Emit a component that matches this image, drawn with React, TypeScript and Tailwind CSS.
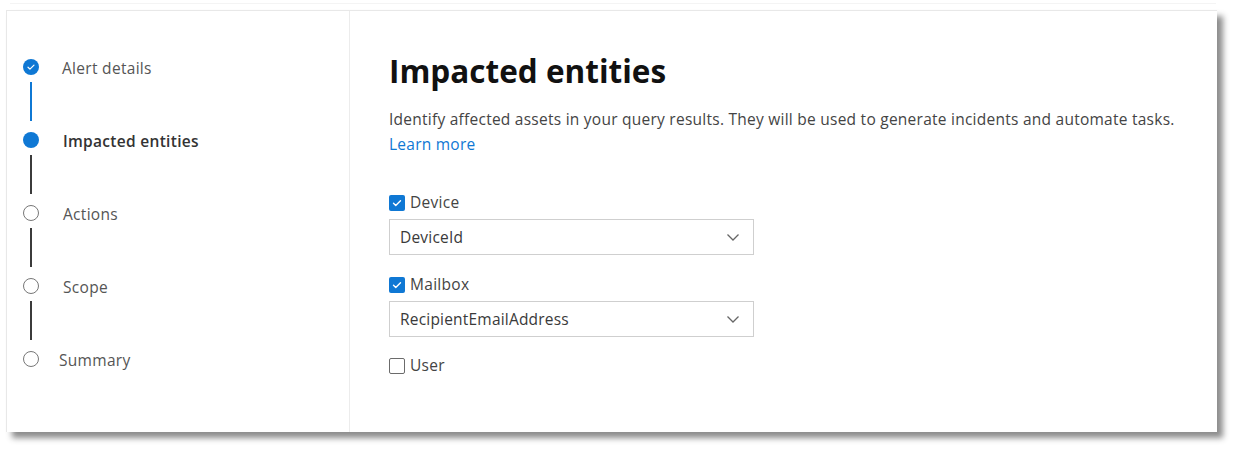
import React from "react";

const font = { fontFamily: '"Open Sans", "Noto Sans", Arial, sans-serif' };

function Check({ className = "" }: { className?: string }) {
  return (
    <svg viewBox="0 0 16 16" className={className} fill="none">
      <path d="M4 8.3l2.6 2.6L12 5.5" stroke="white" strokeWidth="1.6" strokeLinecap="round" strokeLinejoin="round" />
    </svg>
  );
}

function StepCircle({ state }: { state: "done" | "current" | "todo" }) {
  if (state === "done")
    return (
      <div className="w-4 h-4 shrink-0 rounded-full bg-[#0f78d4] flex items-center justify-center">
        <Check className="w-3 h-3" />
      </div>
    );
  if (state === "current") return <div className="w-4 h-4 shrink-0 rounded-full bg-[#0f78d4]" />;
  return <div className="w-4 h-4 shrink-0 rounded-full border-[1.5px] border-[#777] bg-white" />;
}

function Checkbox({ checked, label }: { checked: boolean; label: string }) {
  return (
    <div className="flex items-center gap-[5px] h-[20px]">
      {checked ? (
        <div className="w-4 h-4 rounded-[2px] bg-[#0f78d4] flex items-center justify-center">
          <Check className="w-[14px] h-[14px]" />
        </div>
      ) : (
        <div className="w-4 h-4 rounded-[2px] border border-[#6b6b6b] bg-white" />
      )}
      <span className="text-[15.5px] tracking-[0.3px] text-[#444]">{label}</span>
    </div>
  );
}

function Dropdown({ value }: { value: string }) {
  return (
    <div className="w-[365px] h-[36px] border border-[#cfcfcf] flex items-center justify-between pl-[10px] pr-[12px]">
      <span className="text-[15.5px] tracking-[0.2px] text-[#3a3a3a] pt-[2px]">{value}</span>
      <svg viewBox="0 0 16 16" className="w-4 h-4" fill="none">
        <path d="M2.5 5.5L8 11l5.5-5.5" stroke="#666" strokeWidth="1.3" />
      </svg>
    </div>
  );
}

const steps: { label: string; state: "done" | "current" | "todo"; cls: string; line?: string }[] = [
  { label: "Alert details", state: "done", cls: "ml-[23px] text-[#555]", line: "bg-[#0f78d4]" },
  { label: "Impacted entities", state: "current", cls: "ml-[24px] font-semibold text-[#333]", line: "bg-[#3b3b3b]" },
  { label: "Actions", state: "todo", cls: "ml-[24px] text-[#555]", line: "bg-[#3b3b3b]" },
  { label: "Scope", state: "todo", cls: "ml-[24px] text-[#555]", line: "bg-[#3b3b3b]" },
  { label: "Summary", state: "todo", cls: "ml-[20px] text-[#555]" },
];

export default function App() {
  return (
    <div className="w-[1236px] h-[452px] bg-white relative overflow-hidden" style={font}>
      <div className="h-[4px] border-b border-[#f4f4f4] ml-[10px] mr-[20px]" />
      <div className="pl-[6px] pt-[6px]">
        <div className="w-[1211px] h-[422px] bg-white border-t border-l border-[#e8e8e8] shadow-[6px_6px_6px_rgba(0,0,0,0.45)] flex">
          <div className="w-[343px] border-r border-[#ececec] pt-[48px] pl-[16px] flex flex-col">
            {steps.map((s, i) => (
              <div key={i} className="flex flex-col">
                <div className="flex items-center h-[16px]">
                  <StepCircle state={s.state} />
                  <span className={"text-[15.5px] tracking-[0.3px] pt-[3px] " + s.cls}>{s.label}</span>
                </div>
                {s.line && (
                  <div className="w-4 flex justify-center">
                    <div className={"w-[2px] h-[39px] mt-[7px] mb-[11px] " + s.line} />
                  </div>
                )}
              </div>
            ))}
          </div>
          <div className="flex-1 pl-[39px] pt-[40px]">
            <h1 className="text-[31.5px] leading-[40px] font-bold text-[#111]">Impacted entities</h1>
            <p className="mt-[16px] text-[15.5px] tracking-[0.25px] leading-[25px] text-[#444] whitespace-nowrap">
              Identify affected assets in your query results. They will be used to generate incidents and automate tasks.
            </p>
            <div className="text-[15.5px] tracking-[0.25px] leading-[25px] text-[#0f78d4]">Learn more</div>
            <div className="mt-[36px] flex flex-col">
              <Checkbox checked label="Device" />
              <div className="mt-[6px]">
                <Dropdown value="DeviceId" />
              </div>
              <div className="mt-[20px]">
                <Checkbox checked label="Mailbox" />
              </div>
              <div className="mt-[6px]">
                <Dropdown value="RecipientEmailAddress" />
              </div>
              <div className="mt-[19px]">
                <Checkbox checked={false} label="User" />
              </div>
            </div>
          </div>
        </div>
      </div>
    </div>
  );
}
